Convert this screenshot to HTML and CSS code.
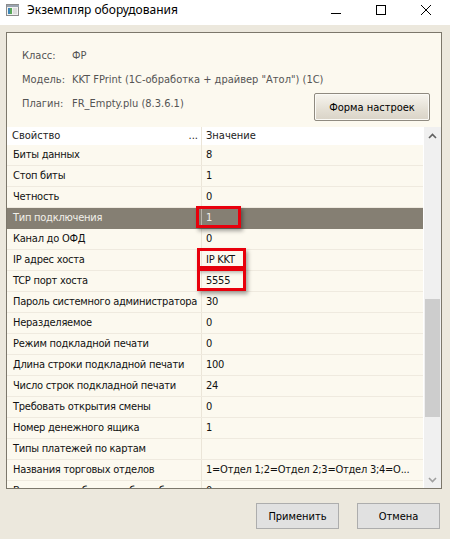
FILE: index.html
```html
<!DOCTYPE html>
<html lang="ru">
<head>
<meta charset="utf-8">
<title>Экземпляр оборудования</title>
<link rel="stylesheet" href="styles.css">
</head>
<body>
<div class="window">
  <div class="titlebar">
    <svg class="app-icon" width="13" height="12" viewBox="0 0 13 12">
      <rect x="0.5" y="0.5" width="12" height="11" fill="#f2f2f2" stroke="#8c8c8c"/>
      <rect x="1" y="1" width="12" height="2" fill="#9aa3b0"/>
      <rect x="2" y="4" width="4" height="6" fill="#3c86b8"/>
      <rect x="4" y="4" width="2" height="6" fill="#5aa85a"/>
      <rect x="7" y="4" width="4" height="6" fill="#dcdcdc"/>
    </svg>
    <span class="title">Экземпляр оборудования</span>
    <div class="controls">
      <svg width="12" height="12" viewBox="0 0 12 12"><line x1="1" y1="9.5" x2="11" y2="9.5" stroke="#000" stroke-width="1"/></svg>
      <svg width="12" height="12" viewBox="0 0 12 12"><rect x="1.5" y="1.5" width="9" height="9" fill="none" stroke="#000" stroke-width="1"/></svg>
      <svg width="12" height="12" viewBox="0 0 12 12"><path d="M1 1 L11 11 M11 1 L1 11" stroke="#000" stroke-width="1"/></svg>
    </div>
  </div>

  <div class="panel">
    <div class="info">
      <div class="info-lines">
        <div class="info-row"><span class="lbl">Класс:</span><span>ФР</span></div>
        <div class="info-row"><span class="lbl">Модель:</span><span>KKT FPrint (1С-обработка + драйвер "Атол") (1С)</span></div>
        <div class="info-row"><span class="lbl">Плагин:</span><span>FR_Empty.plu (8.3.6.1)</span></div>
      </div>
      <button class="btn btn-form">Форма настроек</button>
    </div>

    <div class="grid">
      <div class="grid-main">
        <div class="ghead">
          <div class="c1"><span>Свойство</span><span class="dots">...</span></div>
          <div class="c2">Значение</div>
        </div>
        <div class="rows">
          <div class="row"><div class="c1">Биты данных</div><div class="c2">8</div></div>
          <div class="row"><div class="c1">Стоп биты</div><div class="c2">1</div></div>
          <div class="row"><div class="c1">Четность</div><div class="c2">0</div></div>
          <div class="row selected"><div class="c1">Тип подключения</div><div class="c2">1</div></div>
          <div class="row"><div class="c1">Канал до ОФД</div><div class="c2">0</div></div>
          <div class="row"><div class="c1">IP адрес хоста</div><div class="c2">IP KKT</div></div>
          <div class="row"><div class="c1">TCP порт хоста</div><div class="c2">5555</div></div>
          <div class="row"><div class="c1">Пароль системного администратора</div><div class="c2">30</div></div>
          <div class="row"><div class="c1">Неразделяемое</div><div class="c2">0</div></div>
          <div class="row"><div class="c1">Режим подкладной печати</div><div class="c2">0</div></div>
          <div class="row"><div class="c1">Длина строки подкладной печати</div><div class="c2">100</div></div>
          <div class="row"><div class="c1">Число строк подкладной печати</div><div class="c2">24</div></div>
          <div class="row"><div class="c1">Требовать открытия смены</div><div class="c2">0</div></div>
          <div class="row"><div class="c1">Номер денежного ящика</div><div class="c2">1</div></div>
          <div class="row"><div class="c1">Типы платежей по картам</div><div class="c2"></div></div>
          <div class="row"><div class="c1">Названия торговых отделов</div><div class="c2">1=Отдел 1;2=Отдел 2;3=Отдел 3;4=О...</div></div>
          <div class="row"><div class="c1">Выдавать сообщения об ошибках</div><div class="c2">0</div></div>
        </div>
      </div>
      <div class="scrollbar">
        <div class="arrow"><svg width="9" height="6" viewBox="0 0 9 6"><path d="M1 5 L4.5 1.5 L8 5" fill="none" stroke="#606060" stroke-width="1.6"/></svg></div>
        <div class="track"><div class="thumb"></div></div>
        <div class="arrow"><svg width="9" height="6" viewBox="0 0 9 6"><path d="M1 1 L4.5 4.5 L8 1" fill="none" stroke="#a0a0a0" stroke-width="1.6"/></svg></div>
      </div>
      <div class="mark mark-1"></div>
      <div class="mark mark-2"></div>
      <div class="mark mark-3"></div>
    </div>
  </div>

  <div class="footer">
    <button class="btn btn-std">Применить</button>
    <button class="btn btn-std">Отмена</button>
  </div>
</div>
</body>
</html>
```

FILE: styles.css
```css
* { box-sizing: border-box; }
html, body { margin: 0; padding: 0; }
body {
  width: 450px;
  height: 539px;
  background: #ece8dd;
  font-family: "DejaVu Sans Condensed", "DejaVu Sans", sans-serif;
  font-size: 11px;
  color: #000;
  overflow: hidden;
}
.window { width: 450px; height: 539px; display: flex; flex-direction: column; }

.titlebar {
  height: 25px;
  background: #fff;
  display: flex;
  align-items: flex-start;
  padding: 3px 0 0 6px;
}
.app-icon { margin-top: 1px; }
.title {
  font-family: "Noto Sans", "Open Sans", sans-serif;
  font-size: 12px;
  line-height: 14px;
  margin-left: 8px;
  color: #000;
}
.controls {
  margin-left: auto;
  display: flex;
  gap: 33px;
  padding-right: 18px;
  padding-top: 1px;
}

.panel {
  margin: 7px 0 0 6px;
  width: 436px;
  height: 457px;
  border: 1px solid #7c776b;
  background: #fcf9ef;
  display: flex;
  flex-direction: column;
}

.info {
  height: 94px;
  display: flex;
  align-items: flex-end;
  padding: 11px 11px 6px 15px;
  color: #545454;
}
.info-lines {
  align-self: flex-start;
  flex: 1 1 0;
  min-width: 0;
  display: flex;
  flex-direction: column;
}
.info-row { height: 24px; line-height: 24px; display: flex; white-space: nowrap; }
.lbl { width: 50px; flex: none; }

.btn {
  font-family: "DejaVu Sans Condensed", "DejaVu Sans", sans-serif;
  font-size: 11px;
  color: #000;
  padding: 0;
  cursor: default;
}
.btn-form {
  flex: none;
  width: 116px;
  height: 28px;
  border: 1px solid #8f8a80;
  border-radius: 2px;
  background: linear-gradient(#f7f5ef, #e4dfd4 60%, #d9d3c7);
  box-shadow: inset 0 0 0 1px #fbfaf6;
}

.grid {
  position: relative;
  flex: 1;
  display: flex;
  overflow: hidden;
}
.grid-main { flex: 1; display: flex; flex-direction: column; min-width: 0; }
.ghead {
  height: 18px;
  flex: none;
  background: #fff;
  display: flex;
  line-height: 18px;
  color: #222;
}
.ghead .c1 { display: flex; justify-content: space-between; padding-right: 3px; }
.c1 {
  width: 195px;
  flex: none;
  padding-left: 5px;
  border-right: 1px solid #ebe5d8;
  white-space: nowrap;
  overflow: hidden;
}
.c2 {
  flex: 1;
  padding-left: 4px;
  white-space: nowrap;
  overflow: hidden;
}
.rows { display: flex; flex-direction: column; letter-spacing: -0.25px; }
.row {
  height: 21px;
  flex: none;
  display: flex;
  line-height: 20px;
  border-bottom: 1px solid #efeadf;
  color: #111;
}
.row .c1 { padding-left: 6px; }
.row.selected { background: #857f73; color: #f2f0ea; border-bottom-color: #857f73; }
.row.selected .c1 { border-right-color: #b9b4aa; }

.scrollbar {
  width: 18px;
  flex: none;
  background: #f0f0f0;
  display: flex;
  flex-direction: column;
  border-left: 1px solid #fff;
}
.arrow { height: 17px; display: flex; align-items: center; justify-content: center; }
.track { flex: 1; position: relative; }
.thumb {
  margin: 155px 1px 0 1px;
  height: 118px;
  background: #cdcdcd;
}

.mark {
  position: absolute;
  border: 3px solid #e8000c;
  box-shadow: 2px 3px 4px rgba(0, 0, 0, 0.35);
}
.mark-1 { left: 189px; top: 79px; width: 45px; height: 22px; }
.mark-2 { left: 190px; top: 121px; width: 49px; height: 21px; }
.mark-3 { left: 190px; top: 141px; width: 49px; height: 23px; }

.footer {
  display: flex;
  justify-content: flex-end;
  gap: 18px;
  padding: 14px 10px 0 0;
}
.btn-std {
  width: 83px;
  height: 26px;
  border: 1px solid #adadad;
  background: #e1e1e1;
}
```
